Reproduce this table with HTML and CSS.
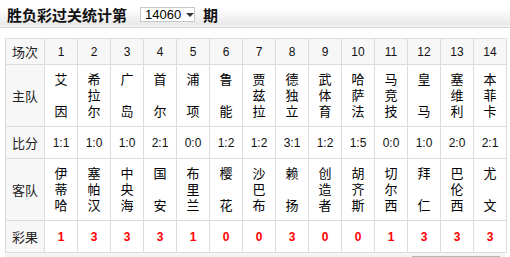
FILE: index.html
```html
<!DOCTYPE html>
<html>
<head>
<meta charset="utf-8">
<link rel="stylesheet" href="styles.css">
</head>
<body>
<div class="bar">
  <span class="title">胜负彩过关统计第</span>
  <span class="select">14060<span class="caret"></span></span>
  <span class="title">期</span>
</div>
<table class="grid">
  <colgroup><col class="c0"><col span="14" class="cn"></colgroup>
  <tr class="r-head">
    <th>场次</th><td>1</td><td>2</td><td>3</td><td>4</td><td>5</td><td>6</td><td>7</td><td>8</td><td>9</td><td>10</td><td>11</td><td>12</td><td>13</td><td>14</td>
  </tr>
  <tr class="r-team">
    <th>主队</th>
    <td>艾<br><br>因</td><td>希<br>拉<br>尔</td><td>广<br><br>岛</td><td>首<br><br>尔</td><td>浦<br><br>项</td><td>鲁<br><br>能</td><td>贾<br>兹<br>拉</td><td>德<br>独<br>立</td><td>武<br>体<br>育</td><td>哈<br>萨<br>法</td><td>马<br>竞<br>技</td><td>皇<br><br>马</td><td>塞<br>维<br>利</td><td>本<br>菲<br>卡</td>
  </tr>
  <tr class="r-score">
    <th>比分</th><td>1:1</td><td>1:0</td><td>1:0</td><td>2:1</td><td>0:0</td><td>1:2</td><td>1:2</td><td>3:1</td><td>1:2</td><td>1:5</td><td>0:0</td><td>1:0</td><td>2:0</td><td>2:1</td>
  </tr>
  <tr class="r-team">
    <th>客队</th>
    <td>伊<br>蒂<br>哈</td><td>塞<br>帕<br>汉</td><td>中<br>央<br>海</td><td>国<br><br>安</td><td>布<br>里<br>兰</td><td>樱<br><br>花</td><td>沙<br>巴<br>布</td><td>赖<br><br>扬</td><td>创<br>造<br>者</td><td>胡<br>齐<br>斯</td><td>切<br>尔<br>西</td><td>拜<br><br>仁</td><td>巴<br>伦<br>西</td><td>尤<br><br>文</td>
  </tr>
  <tr class="r-result">
    <th>彩果</th><td>1</td><td>3</td><td>3</td><td>3</td><td>1</td><td>0</td><td>0</td><td>3</td><td>0</td><td>0</td><td>1</td><td>3</td><td>3</td><td>3</td>
  </tr>
</table>
<div class="foot"><span class="thumb"></span></div>
</body>
</html>
```
FILE: styles.css
```css
html, body {
  margin: 0;
  padding: 0;
  background: #fff;
  font-family: "Liberation Sans", "Noto Sans CJK SC", sans-serif;
  color: #000;
}
.bar {
  height: 28px;
  box-sizing: border-box;
  padding: 6px 0 0 7px;
  background: linear-gradient(#ffffff, #ffffff 30%, #e9e9e9 90%, #f6f6f6);
  border-bottom: 1px solid #d6d6d6;
  display: flex;
  align-items: flex-start;
}
.title {
  font-family: "Noto Sans CJK SC", sans-serif;
  font-weight: bold;
  font-size: 15px;
  line-height: 17px;
  color: #111;
}
.select {
  margin: 1px 8px 0 13px;
  width: 55px;
  height: 15px;
  box-sizing: border-box;
  border: 1px solid #c8c8c8;
  background: #fff;
  font-size: 13px;
  line-height: 13px;
  padding-left: 4px;
  display: flex;
  align-items: center;
  gap: 5px;
  color: #000;
}
.caret {
  width: 0;
  height: 0;
  border-left: 4px solid transparent;
  border-right: 4px solid transparent;
  border-top: 4px solid #333;
  margin-top: 1px;
}
.grid {
  margin: 10px 0 0 5px;
  border-collapse: collapse;
  table-layout: fixed;
  width: 501px;
  font-size: 12px;
}
.c0 { width: 39px; }
.cn { width: 33px; }
.grid th, .grid td {
  border: 1px solid #dcdcdc;
  text-align: center;
  vertical-align: middle;
  padding: 0;
}
.grid th {
  background: #f7f7f7;
  font-weight: normal;
  font-size: 13px;
  color: #222;
}
.r-head td { background: #f7f7f7; color: #111; }
.r-head { height: 26px; }
.r-team { height: 62px; }
.r-team td {
  font-size: 13px;
  line-height: 16px;
  padding-top: 1px;
}
.r-score { height: 32px; }
.r-score td { color: #111; }
.r-result { height: 32px; }
.r-result td { color: #f00; font-weight: bold; }
.foot {
  margin-left: 5px;
  width: 500px;
  height: 5px;
  background: #f4f4f4;
  display: flex;
  justify-content: flex-end;
  align-items: flex-end;
}
.thumb {
  width: 88px;
  height: 2px;
  background: #b5b5b5;
  margin-right: 5px;
}
```
